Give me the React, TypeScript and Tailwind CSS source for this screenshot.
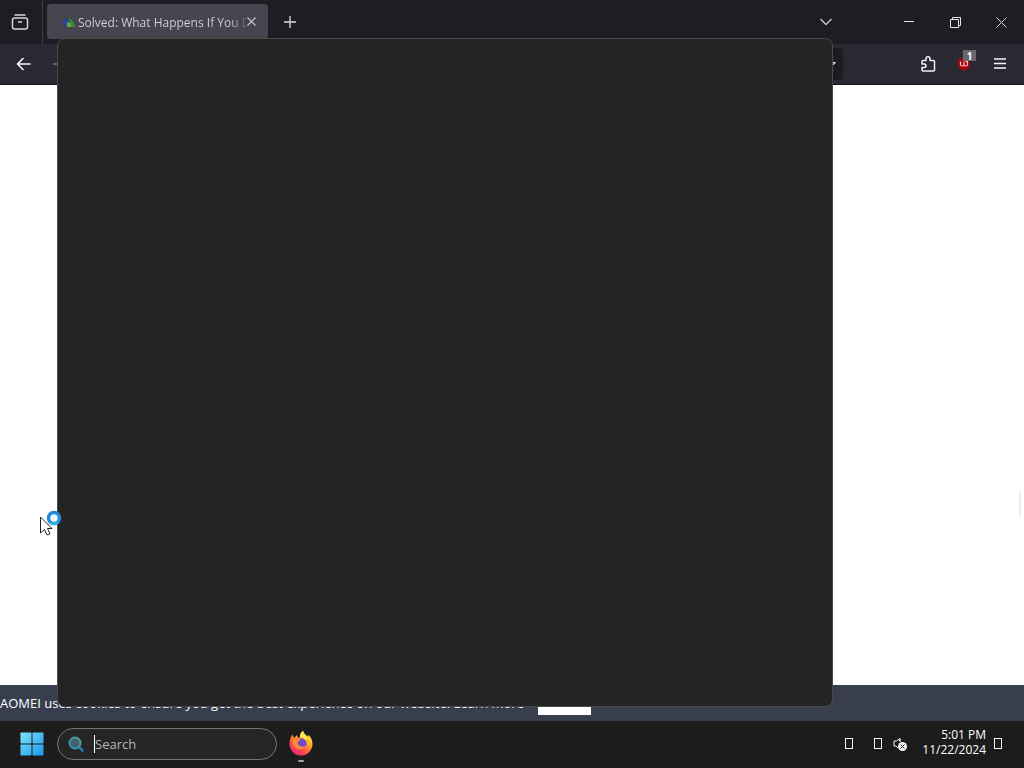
import React from "react";

function ViewIcon() {
  return (
    <svg width="18" height="18" viewBox="0 0 18 18" fill="none" stroke="#d8d8de" strokeWidth="1.5" strokeLinecap="round">
      <path d="M4 2h10" />
      <rect x="1.5" y="5" width="15" height="11" rx="2" />
      <path d="M7.500 9h3" />
    </svg>
  );
}

function TabLogo() {
  return (
    <svg width="16" height="16" viewBox="0 0 16 16">
      <path d="M1 10 7.500 4l3 5-4 4z" fill="#24489c" />
      <path d="M8 4c4 1 7 5 7 9h-4C11 10 10 7 8 4z" fill="#2f8f35" />
      <path d="M7 8l4 1v4H7z" fill="#7b9b3b" />
    </svg>
  );
}

function WindowsLogo() {
  return (
    <svg width="24" height="24" viewBox="0 0 24 24">
      <defs>
        <linearGradient id="win" x1="0" y1="0" x2="24" y2="24" gradientUnits="userSpaceOnUse">
          <stop stopColor="#7ee6fb" />
          <stop offset="1" stopColor="#1595ea" />
        </linearGradient>
      </defs>
      <g fill="url(#win)">
        <rect x="0.5" y="0.5" width="11" height="11" rx="0.7" />
        <rect x="12.5" y="0.5" width="11" height="11" rx="0.7" />
        <rect x="0.5" y="12.5" width="11" height="11" rx="0.7" />
        <rect x="12.5" y="12.5" width="11" height="11" rx="0.7" />
      </g>
    </svg>
  );
}

function SearchLogo() {
  return (
    <svg width="18" height="18" viewBox="0 0 18 18">
      <defs>
        <linearGradient id="lens" x1="2" y1="14" x2="14" y2="2" gradientUnits="userSpaceOnUse">
          <stop stopColor="#2293c4" />
          <stop offset="1" stopColor="#639b96" />
        </linearGradient>
      </defs>
      <path d="m12 12 3.500 3.500" stroke="#1f7fb5" strokeWidth="2.5" strokeLinecap="round" />
      <circle cx="8" cy="8" r="5.5" fill="#45606a" stroke="url(#lens)" strokeWidth="2" />
    </svg>
  );
}

function FirefoxLogo() {
  return (
    <svg width="24" height="26" viewBox="0 0 24 26">
      <defs>
        <linearGradient id="fox" x1="20" y1="3" x2="5" y2="24" gradientUnits="userSpaceOnUse">
          <stop stopColor="#fff04a" />
          <stop offset="0.4" stopColor="#ff9a2a" />
          <stop offset="0.7" stopColor="#ff4c48" />
          <stop offset="1" stopColor="#e5257f" />
        </linearGradient>
      </defs>
      <path d="M14 1c1 3 3 4 5 6 .4-1 .3-2 .1-2.5C22 7 23.5 10 23.5 14A11.5 11.5 0 0 1 .5 14C.5 10 1.5 7 3.5 4.500L5 8l3-3 1 3 2-1c0-3 1-5 3-6z" fill="url(#fox)" />
      <path d="M14 1c1 3 3 4 5 6l-2 3c-2-2-4-3-6-3 0-3 1-5 3-6z" fill="#ffe94d" />
      <circle cx="12.5" cy="13.5" r="5" fill="#7448c8" />
      <path d="M4 10c3-2 4-1 7-.5 0 2-2 1.500-2.500 3C9 16 13 18 17 16c-2 4-10 5-13-1z" fill="#ff8a36" />
    </svg>
  );
}

function Speaker() {
  return (
    <svg width="16" height="16" viewBox="0 0 16 16" fill="none">
      <path d="M8 5V2.500L4.500 5H2v5h2l2 2M8 3v3" stroke="#f4f4f4" />
      <circle cx="10.5" cy="10.5" r="4.5" fill="#f4f4f4" />
      <path d="m8.500 8.500 4 4m0-4-4 4" stroke="#222" />
    </svg>
  );
}

function TrayGlyph({ label }: { label: string }) {
  return (
    <button aria-label={label} className="flex h-8 w-4 items-center justify-center">
      <span className="block h-[11px] w-2 border border-[#f4f4f4]" />
    </button>
  );
}

function TabBar() {
  return (
    <header className="flex h-11 shrink-0 items-start bg-[#1e1d24]">
      <button aria-label="Firefox View" className="flex h-11 w-[43px] items-center justify-center border-r border-[#3c3b44] pr-0.5">
        <ViewIcon />
      </button>
      <div className="mt-1 ml-1 flex h-[35px] w-[221px] items-center rounded bg-[#46444f] pr-3 pl-[13px]">
        <TabLogo />
        <span className="ml-0.5 flex-1 overflow-hidden bg-gradient-to-r from-[#d5d4dc] from-90% to-[#5f5d68] bg-clip-text pt-0.5 text-xs whitespace-nowrap text-transparent">
          Solved: What Happens If You D
        </span>
        <button aria-label="Close tab" className="flex h-6 w-2.5 items-center justify-center">
          <svg width="9" height="9" viewBox="0 0 9 9" stroke="#c9c8d0" strokeWidth="1.1"><path d="m.5.5 8 8m0-8-8 8" /></svg>
        </button>
      </div>
      <button aria-label="New tab" className="flex h-11 w-11 items-center justify-center">
        <svg width="12" height="12" viewBox="0 0 12 12" stroke="#dddde2" strokeWidth="1.3"><path d="M6 0v12M0 6h12" /></svg>
      </button>
      <div className="ml-auto flex h-11 items-center">
        <button aria-label="List all tabs" className="mr-[38px] flex h-11 w-11 items-center justify-center">
          <svg width="12" height="8" viewBox="0 0 12 8" fill="none" stroke="#c9c8ce" strokeWidth="1.4"><path d="m.5 1 5.500 5.500L11.500 1" /></svg>
        </button>
        <button aria-label="Minimize" className="flex h-11 w-[46px] items-center justify-center">
          <svg width="10" height="10" viewBox="0 0 10 10" stroke="#e5e5e8"><path d="M0 4.500h10" /></svg>
        </button>
        <button aria-label="Restore" className="flex h-11 w-[46px] items-center justify-center">
          <svg width="11" height="11" viewBox="0 0 11 11" fill="none" stroke="#e5e5e8"><path d="M.5 2.500h8v8h-8zM2.500 2.500v-2h8v8h-2" /></svg>
        </button>
        <button aria-label="Close" className="flex h-11 w-[46px] items-center justify-center">
          <svg width="11" height="11" viewBox="0 0 11 11" stroke="#d4d4d8"><path d="m.5.5 10 10m0-10-10 10" /></svg>
        </button>
      </div>
    </header>
  );
}

function Toolbar() {
  return (
    <nav aria-label="Navigation" className="flex h-[41px] shrink-0 items-center border-b border-[#111016] bg-[#2a2933] pr-1.5">
      <button aria-label="Back" className="ml-2 flex h-8 w-8 items-center justify-center">
        <svg width="16" height="14" viewBox="0 0 16 14" fill="none" stroke="#fbfbfe" strokeWidth="1.6" strokeLinecap="round" strokeLinejoin="round"><path d="M14 7H1.500M7 1.500 1.500 7l5.500 5.500" /></svg>
      </button>
      <button aria-label="Forward" className="ml-3 flex h-8 w-8 items-center">
        <svg width="16" height="14" viewBox="0 0 16 14" fill="none" stroke="#77767e" strokeWidth="1.5"><path d="M1 7h13M8.500 1.500 14 7l-5.500 5.500" /></svg>
      </button>
      <div className="ml-auto flex h-8 w-16 items-center justify-end rounded bg-[#1c1b22] pr-[7px]">
        <button aria-label="Bookmark this page">
          <svg width="14" height="14" viewBox="0 0 16 16" fill="none" stroke="#dddde2" strokeWidth="1.4"><path d="m8 1 2 5 5 .5-4 3.500 1 5-4-3-4 3 1-5-4-3.500L6 6z" /></svg>
        </button>
      </div>
      <button aria-label="Extensions" className="ml-[67px] flex h-9 w-9 items-center justify-center">
        <svg width="16" height="18" viewBox="0 0 16 18" fill="none" stroke="#f0f0f4" strokeWidth="1.5" strokeLinejoin="round">
          <path d="M2 9V6.500a1 1 0 0 1 1-1h3V3.800a2 2 0 0 1 4 0v1.700h3.500a1 1 0 0 1 1 1V15a1 1 0 0 1-1 1H3a1 1 0 0 1-1-1v-2.500h2.200a1.700 1.700 0 0 0 0-3.500z" />
        </svg>
      </button>
      <button aria-label="uBlock Origin, 1 blocked" className="relative flex h-9 w-9 items-center justify-center">
        <svg width="16" height="16" viewBox="0 0 16 16" fill="none">
          <path d="M8 1c2 1.500 4 1.500 6 2v5c0 3-2 5-6 7-4-2-6-4-6-7V3c2-.5 4-.5 6-2z" fill="#a8050e" />
          <path d="M4.500 5.500v3q0 1.500 1.700 1.500T8 8.500v-3m0 3q0 1.500 1.700 1.500t1.800-1.500v-3H9.500" stroke="#f1c9ce" strokeWidth="1.1" />
        </svg>
        <span className="absolute top-1 right-1.5 flex h-[11px] w-[13px] items-center justify-center bg-[#68676d] text-[10px] leading-none font-bold text-white">1</span>
      </button>
      <button aria-label="Menu" className="flex h-9 w-9 items-center justify-center">
        <svg width="14" height="12" viewBox="0 0 14 12" stroke="#f5f5f8" strokeWidth="1.4"><path d="M1 1h12M1 5.500h12M1 10h12" /></svg>
      </button>
    </nav>
  );
}

function CookieBar() {
  return (
    <div className="flex h-9 shrink-0 items-center gap-3.5 bg-[#383e4d] text-[13px] text-white">
      <p className="pt-0.5 whitespace-nowrap">
        AOMEI uses cookies to ensure you get the best experience on our website. <a href="#learn-more">Learn more</a>
      </p>
      <button className="h-6 w-[53px] bg-white text-[#383e4d]">Got it!</button>
    </div>
  );
}

function Taskbar() {
  return (
    <footer className="flex h-[47px] shrink-0 items-center bg-[#1c1c1c] pb-0.5 text-white">
      <button aria-label="Start" className="ml-5 flex h-10 w-6 items-center justify-center"><WindowsLogo /></button>
      <label className="ml-[13px] flex h-8 w-[220px] items-center rounded-full border border-[#747474] bg-[#252525] pl-[9px]">
        <SearchLogo />
        <span className="ml-[9px] h-[18px] w-px shrink-0 bg-white" />
        <input aria-label="Search" placeholder="Search" className="w-32 bg-transparent text-[13px] leading-5 text-white outline-none placeholder:text-[#b6b6b6]" />
      </label>
      <button aria-label="Firefox" className="ml-3 flex h-11 w-6 flex-col items-center justify-end gap-1 pb-1">
        <FirefoxLogo />
        <span className="h-0.5 w-1.5 rounded-full bg-[#a5a5a5]" />
      </button>
      <div className="ml-auto flex items-center pr-[18px]">
        <TrayGlyph label="Show hidden icons" />
        <span className="w-[13px]" />
        <TrayGlyph label="Network" />
        <button aria-label="Volume muted" className="ml-1.5"><Speaker /></button>
        <button className="mr-1 ml-3.5 pb-1 text-right text-xs leading-[15px]">
          <span className="block">5:01 PM</span>
          <span className="block">11/22/2024</span>
        </button>
        <TrayGlyph label="Notifications" />
      </div>
    </footer>
  );
}

function BusyCursor() {
  return (
    <svg className="absolute top-[508px] left-[39px]" width="24" height="30" viewBox="0 0 24 30">
      <path d="M1.500 9v16l4-3.500 2.500 5.500 3-1.300-2.500-5.200H13z" fill="#fff" stroke="#222" />
      <circle cx="15" cy="10" r="5.5" fill="#e8faff" stroke="#2587d9" strokeWidth="3.5" />
      <path d="M11 14a5.500 5.500 0 0 0 8 0" fill="none" stroke="#29b5df" strokeWidth="3" />
    </svg>
  );
}

export default function App() {
  return (
    <div className="relative flex min-h-screen flex-col overflow-hidden bg-white font-[Open_Sans,Noto_Sans,sans-serif]">
      <TabBar />
      <Toolbar />
      <main className="flex flex-1 items-end justify-end bg-white pr-[3px] pb-[168px]">
        <div className="h-[26px] w-0.5 bg-[#ececec]" />
      </main>
      <CookieBar />
      <Taskbar />
      <section aria-label="Search results" className="absolute top-[38px] right-[191px] bottom-[61px] left-[57px] rounded-lg border border-[#494949] bg-[#242424]" />
      <BusyCursor />
    </div>
  );
}
